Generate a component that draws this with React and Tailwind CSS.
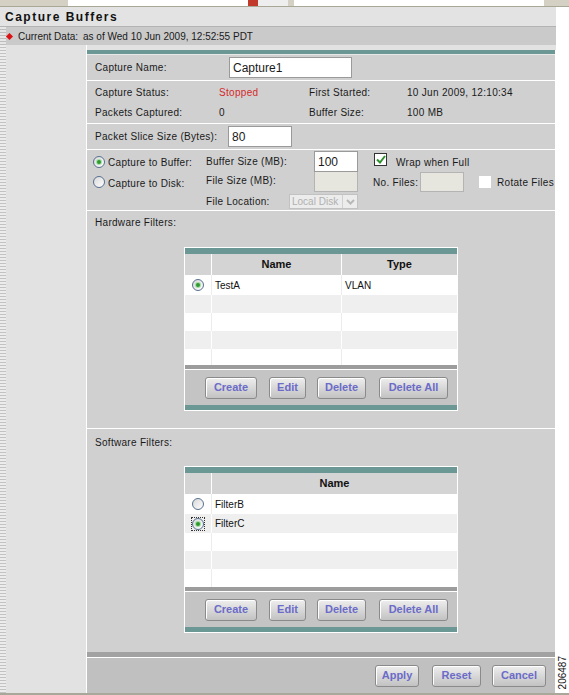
import React from "react";

const Radio = ({ checked, focus }) => (
  <span className={`inline-flex items-center justify-center w-[14px] h-[14px] shrink-0 ${focus ? "outline-1 outline-dotted outline-[#333] -outline-offset-1" : ""}`}>
    <span className="w-[12px] h-[12px] rounded-full border border-[#56708f] bg-gradient-to-br from-[#d8d8d8] to-white flex items-center justify-center">
      {checked && <span className="w-[4px] h-[4px] rounded-full bg-[#2f9a2f] ring-1 ring-[#a6dca6]" />}
    </span>
  </span>
);

const Btn = ({ label, w }) => (
  <button className={`${w} h-[22px] rounded-[3px] border border-[#8a8a8a] bg-gradient-to-b from-[#eeeeee] to-[#c2c2c2] text-[11px] font-bold text-[#6b6bc8] shadow-[inset_1px_1px_0_#fff]`}>
    {label}
  </button>
);

const FilterTable = ({ cols, headers, rows }) => (
  <div className="w-[274px] border border-white">
    <div className="h-[6px] bg-[#6b9894]" />
    <div className="flex h-[21px] bg-[#d4d4d4] text-[11px] font-bold text-[#111]">
      {headers.map((h, i) => (
        <div key={i} className={`${cols[i]} flex items-center justify-center ${i > 0 ? "border-l border-white" : ""}`}>{h}</div>
      ))}
    </div>
    {rows.map((r, ri) => (
      <div key={ri} className={`flex ${r.h} ${ri % 2 === 0 ? "bg-white" : "bg-[#efefef]"} text-[10px] text-[#111]`}>
        {r.cells.map((c, ci) => (
          <div key={ci} className={`${cols[ci]} flex items-center ${ci === 0 ? "justify-center" : "pl-[3px]"} ${ci > 0 ? (ri % 2 === 0 ? "border-l border-[#ececec]" : "border-l border-white") : ""}`}>
            {c}
          </div>
        ))}
      </div>
    ))}
    <div className="h-[4px] bg-[#9c9c9c]" />
    <div className="h-[1px] bg-white" />
    <div className="h-[35px] bg-[#c4c4c4] flex items-center pl-[20px]">
      <Btn label="Create" w="w-[52px]" />
      <span className="w-[12px]" />
      <Btn label="Edit" w="w-[37px]" />
      <span className="w-[11px]" />
      <Btn label="Delete" w="w-[49px]" />
      <span className="w-[13px]" />
      <Btn label="Delete All" w="w-[69px]" />
    </div>
    <div className="h-[5px] bg-[#6b9894]" />
  </div>
);

const hwRows = [
  { h: "h-[20px]", cells: [<Radio checked />, "TestA", "VLAN"] },
  { h: "h-[18px]", cells: ["", "", ""] },
  { h: "h-[18px]", cells: ["", "", ""] },
  { h: "h-[18px]", cells: ["", "", ""] },
  { h: "h-[16px]", cells: ["", "", ""] },
];

const swRows = [
  { h: "h-[20px]", cells: [<Radio />, "FilterB"] },
  { h: "h-[19px]", cells: [<Radio checked focus />, "FilterC"] },
  { h: "h-[18px]", cells: ["", ""] },
  { h: "h-[18px]", cells: ["", ""] },
  { h: "h-[18px]", cells: ["", ""] },
];

export default function App() {
  return (
    <div className="w-[569px] h-[695px] overflow-hidden flex flex-col bg-white font-['Liberation_Sans',Arial,sans-serif] text-[#1a1a1a]">
      {/* browser chrome remnant */}
      <div className="h-[7px] flex bg-[#d4d0c4] border-b border-[#a9a795]">
        <div className="w-[68px]" />
        <div className="w-[180px] bg-white" />
        <div className="w-[10px] bg-[#c0392b]" />
        <div className="w-[30px] bg-[#eeeeee]" />
        <div className="w-[6px]" />
        <div className="w-[250px] bg-white" />
      </div>

      <div className="flex flex-1">
        <div className="w-[556px] flex flex-col">
          {/* title */}
          <div className="h-[20px] bg-[#e3e3e3] border-b border-[#b4b4b4] flex items-center pl-[5px]">
            <span className="text-[12px] font-bold tracking-[1.5px] text-[#111]">Capture Buffers</span>
          </div>
          {/* current data */}
          <div className="h-[18px] bg-[#cacaca] flex items-center text-[10px]">
            <div className="w-[6px] self-stretch bg-[repeating-linear-gradient(0deg,#bdbdbd_0px,#bdbdbd_1px,#e6e6e6_1px,#e6e6e6_3px)]" />
            <span className="w-[5px] h-[5px] bg-[#d11] rotate-45 ml-[1px]" />
            <span className="ml-[6px]">Current Data:</span>
            <span className="ml-[5px]">as of Wed 10 Jun 2009, 12:52:55 PDT</span>
          </div>

          <div className="flex flex-1">
            {/* left gutter */}
            <div className="w-[87px] bg-[#e2e2e2] flex border-r border-white">
              <div className="w-[6px] bg-[repeating-linear-gradient(0deg,#c2c2c2_0px,#c2c2c2_1px,#ececec_1px,#ececec_3px)]" />
            </div>

            {/* main panel */}
            <div className="flex-1 flex flex-col bg-[#e2e2e2] text-[10px] tracking-[0.3px]">
              <div className="h-[5px]" />
              <div className="flex-1 flex flex-col bg-[#d0d0d0] border-r border-white">
                <div className="h-[4px] bg-[#6b9894]" />
                <div className="h-[1px] bg-[#e8e8e8]" />

                {/* capture name */}
                <div className="h-[26px] flex items-center pl-[8px] border-b border-white">
                  <span className="w-[134px]">Capture Name:</span>
                  <div className="w-[123px] h-[21px] bg-white border border-[#9a9a9a] flex items-center pl-[3px] text-[12px] tracking-normal">Capture1</div>
                </div>

                {/* status */}
                <div className="h-[43px] flex flex-col justify-center pl-[8px] border-b border-white">
                  <div className="flex h-[20px] items-center">
                    <span className="w-[124px]">Capture Status:</span>
                    <span className="w-[90px] text-[#d42a2a]">Stopped</span>
                    <span className="w-[98px]">First Started:</span>
                    <span>10 Jun 2009, 12:10:34</span>
                  </div>
                  <div className="flex h-[20px] items-center">
                    <span className="w-[124px]">Packets Captured:</span>
                    <span className="w-[90px]">0</span>
                    <span className="w-[98px]">Buffer Size:</span>
                    <span>100 MB</span>
                  </div>
                </div>

                {/* slice size */}
                <div className="h-[26px] flex items-center pl-[8px] border-b border-white">
                  <span className="w-[133px]">Packet Slice Size (Bytes):</span>
                  <div className="w-[64px] h-[21px] bg-white border border-[#9a9a9a] flex items-center pl-[3px] text-[12px] tracking-normal">80</div>
                </div>

                {/* capture mode */}
                <div className="h-[61px] flex flex-col pl-[5px] border-b border-white">
                  <div className="flex h-[21px] mt-[1px] items-center">
                    <div className="w-[114px] flex items-center">
                      <Radio checked />
                      <span className="ml-[2px] mt-[2px]">Capture to Buffer:</span>
                    </div>
                    <span className="w-[108px]">Buffer Size (MB):</span>
                    <div className="w-[44px] h-[21px] bg-white border border-[#9a9a9a] flex items-center pl-[3px] text-[12px] tracking-normal">100</div>
                    <span className="ml-[16px] w-[13px] h-[13px] mb-[4px] bg-white border border-[#333] flex items-center justify-center">
                      <svg width="10" height="9" viewBox="0 0 10 9"><path d="M1 4.5 L4 7.5 L9 1" fill="none" stroke="#2f8f2f" strokeWidth="2" /></svg>
                    </span>
                    <span className="ml-[9px] mt-[2px]">Wrap when Full</span>
                  </div>
                  <div className="flex h-[20px] items-center">
                    <div className="w-[114px] flex items-center">
                      <Radio />
                      <span className="ml-[2px] mt-[3px]">Capture to Disk:</span>
                    </div>
                    <span className="w-[108px] mb-[3px]">File Size (MB):</span>
                    <div className="w-[44px] h-[20px] bg-[#e6e6de] border border-[#b4b4b4] border-t-0" />
                    <span className="ml-[15px] w-[47px]">No. Files:</span>
                    <div className="w-[44px] h-[20px] bg-[#e6e6de] border border-[#b4b4b4]" />
                    <span className="ml-[15px] w-[12px] h-[12px] bg-white" />
                    <span className="ml-[6px]">Rotate Files</span>
                  </div>
                  <div className="flex h-[15px] mt-[2px] items-center">
                    <span className="w-[114px]" />
                    <span className="w-[83px]">File Location:</span>
                    <div className="w-[69px] h-[15px] bg-[#ececec] border border-[#c2c2c2] flex items-center text-[10px] text-[#b0b0b0] tracking-normal">
                      <span className="flex-1 pl-[2px]">Local Disk</span>
                      <span className="w-[15px] h-[13px] border-l border-[#d0d0d0] flex items-center justify-center">
                        <svg width="9" height="6" viewBox="0 0 9 6"><path d="M1 1 L4.5 4.5 L8 1" fill="none" stroke="#b8b8b8" strokeWidth="2" /></svg>
                      </span>
                    </div>
                  </div>
                </div>

                {/* hardware filters */}
                <div className="h-[218px] flex flex-col border-b border-white">
                  <div className="pl-[8px] pt-[4px] h-[36px]">Hardware Filters:</div>
                  <div className="flex justify-center tracking-normal">
                    <FilterTable
                      cols={["w-[26px]", "w-[130px]", "w-[116px]"]}
                      headers={["", "Name", "Type"]}
                      rows={hwRows}
                    />
                  </div>
                </div>

                {/* software filters */}
                <div className="flex-1 flex flex-col">
                  <div className="pl-[8px] pt-[6px] h-[37px]">Software Filters:</div>
                  <div className="flex justify-center tracking-normal">
                    <FilterTable
                      cols={["w-[26px]", "w-[246px]"]}
                      headers={["", "Name"]}
                      rows={swRows}
                    />
                  </div>
                </div>

                <div className="h-[5px] bg-[#a2a2a2]" />
                <div className="h-[1px] bg-white" />
                <div className="h-[35px] bg-[#c0c0c0] flex items-center justify-end pr-[9px] tracking-normal">
                  <Btn label="Apply" w="w-[44px]" />
                  <span className="w-[13px]" />
                  <Btn label="Reset" w="w-[49px]" />
                  <span className="w-[11px]" />
                  <Btn label="Cancel" w="w-[54px]" />
                </div>
              </div>
            </div>
          </div>
        </div>

        {/* right margin with figure number */}
        <div className="w-[13px] bg-white flex flex-col justify-end items-center pb-[4px]">
          <span className="[writing-mode:vertical-rl] rotate-180 text-[10px] leading-none text-[#111]">206487</span>
        </div>
      </div>
      <div className="h-[2px] bg-[#a8a89a]" />
    </div>
  );
}
